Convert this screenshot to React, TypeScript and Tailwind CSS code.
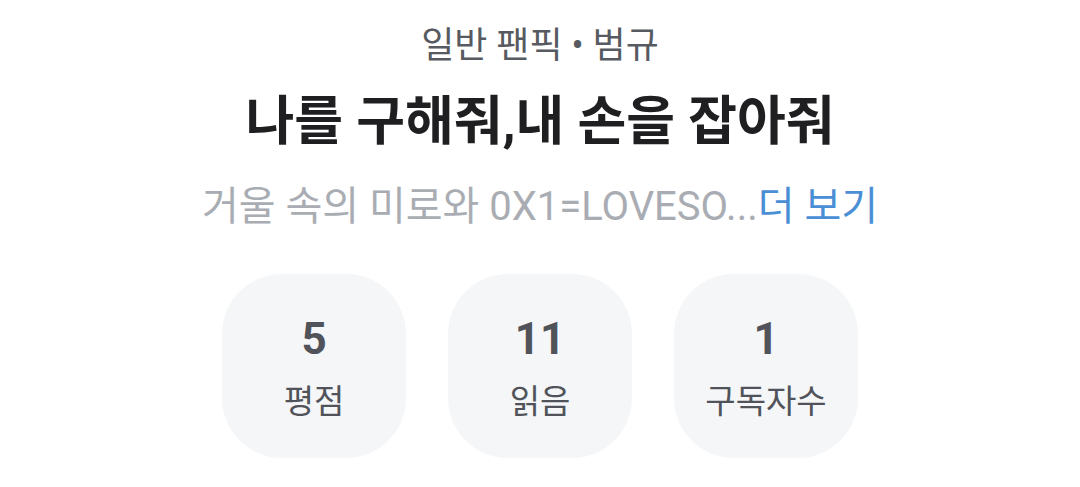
import React from "react";

const stats = [
    { value: "5", label: "평점" },
    { value: "11", label: "읽음" },
    { value: "1", label: "구독자수" },
];

const App: React.FC = () => {
    return (
        <div
            className="w-[1080px] h-[487px] bg-white flex flex-col items-center"
            style={{ fontFamily: "Roboto, 'Noto Sans CJK KR', sans-serif" }}
        >
            <div className="mt-[22px] text-[36px] leading-[48px] text-[#575b61]">
                일반 팬픽 • 범규
            </div>
            <div className="mt-[20px] text-[53px] leading-[64px] font-bold text-[#1f1f21]">
                나를 구해줘,내 손을 잡아줘
            </div>
            <div className="mt-[27px] text-[40px] leading-[52px] text-[#a9adb3]">
                거울 속의 미로와 0X1=LOVESO...
                <span className="text-[#4a8fd6]">더 보기</span>
            </div>
            <div className="mt-[41px] flex gap-[42px]">
                {stats.map((s) => (
                    <div
                        key={s.label}
                        className="w-[184px] h-[184px] pt-[4px] rounded-[60px] bg-[#f5f6f8] flex flex-col items-center justify-center"
                    >
                        <div className="text-[44px] leading-[52px] font-bold text-[#50545a]">
                            {s.value}
                        </div>
                        <div className="mt-[15px] text-[33px] leading-[44px] text-[#50545a]">
                            {s.label}
                        </div>
                    </div>
                ))}
            </div>
        </div>
    );
};

export default App;
